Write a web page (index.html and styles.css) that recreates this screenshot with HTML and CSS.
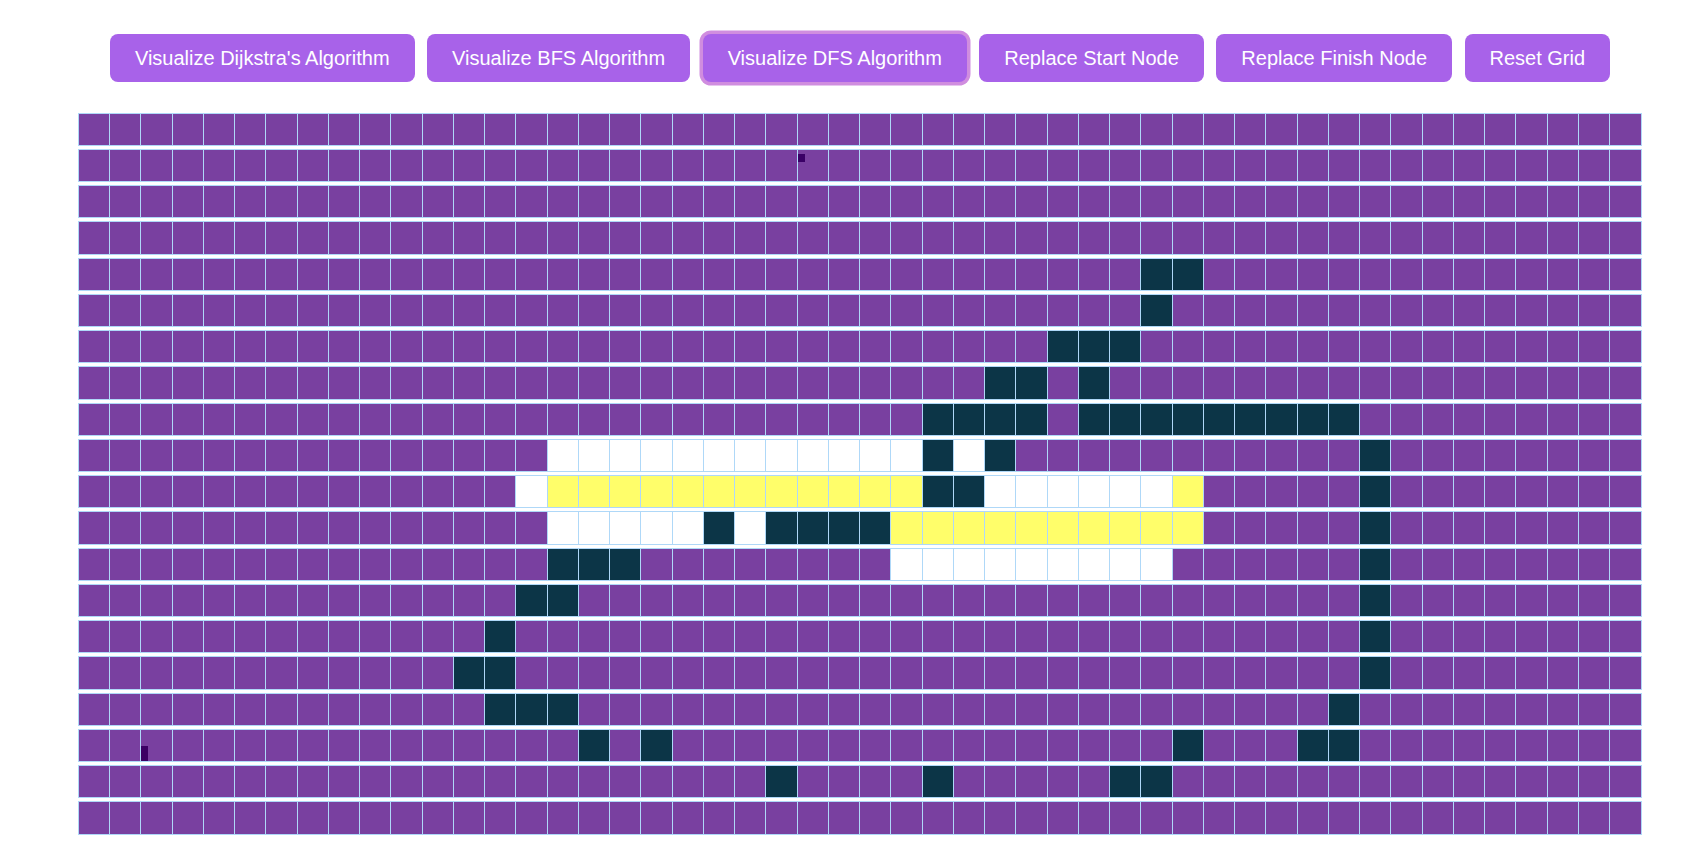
FILE: index.html
```html
<!DOCTYPE html>
<html lang="en">
<head>
<meta charset="utf-8">
<title>Pathfinding Visualizer</title>
<link rel="stylesheet" href="styles.css">
</head>
<body>
<div class="page">
  <div class="toolbar">
    <button class="btn">Visualize Dijkstra's Algorithm</button>
    <button class="btn">Visualize BFS Algorithm</button>
    <button class="btn btn-focused">Visualize DFS Algorithm</button>
    <button class="btn">Replace Start Node</button>
    <button class="btn">Replace Finish Node</button>
    <button class="btn">Reset Grid</button>
  </div>
  <div class="grid">
    <!-- row 0 -->
    <div class="row">
      <div class="cell"></div><div class="cell"></div><div class="cell"></div><div class="cell"></div><div class="cell"></div><div class="cell"></div><div class="cell"></div><div class="cell"></div><div class="cell"></div><div class="cell"></div>
      <div class="cell"></div><div class="cell"></div><div class="cell"></div><div class="cell"></div><div class="cell"></div><div class="cell"></div><div class="cell"></div><div class="cell"></div><div class="cell"></div><div class="cell"></div>
      <div class="cell"></div><div class="cell"></div><div class="cell"></div><div class="cell"></div><div class="cell"></div><div class="cell"></div><div class="cell"></div><div class="cell"></div><div class="cell"></div><div class="cell"></div>
      <div class="cell"></div><div class="cell"></div><div class="cell"></div><div class="cell"></div><div class="cell"></div><div class="cell"></div><div class="cell"></div><div class="cell"></div><div class="cell"></div><div class="cell"></div>
      <div class="cell"></div><div class="cell"></div><div class="cell"></div><div class="cell"></div><div class="cell"></div><div class="cell"></div><div class="cell"></div><div class="cell"></div><div class="cell"></div><div class="cell"></div>
    </div>
    <!-- row 1 -->
    <div class="row">
      <div class="cell"></div><div class="cell"></div><div class="cell"></div><div class="cell"></div><div class="cell"></div><div class="cell"></div><div class="cell"></div><div class="cell"></div><div class="cell"></div><div class="cell"></div>
      <div class="cell"></div><div class="cell"></div><div class="cell"></div><div class="cell"></div><div class="cell"></div><div class="cell"></div><div class="cell"></div><div class="cell"></div><div class="cell"></div><div class="cell"></div>
      <div class="cell"></div><div class="cell"></div><div class="cell"></div><div class="cell"><span class="marker-start"></span></div><div class="cell"></div><div class="cell"></div><div class="cell"></div><div class="cell"></div><div class="cell"></div><div class="cell"></div>
      <div class="cell"></div><div class="cell"></div><div class="cell"></div><div class="cell"></div><div class="cell"></div><div class="cell"></div><div class="cell"></div><div class="cell"></div><div class="cell"></div><div class="cell"></div>
      <div class="cell"></div><div class="cell"></div><div class="cell"></div><div class="cell"></div><div class="cell"></div><div class="cell"></div><div class="cell"></div><div class="cell"></div><div class="cell"></div><div class="cell"></div>
    </div>
    <!-- row 2 -->
    <div class="row">
      <div class="cell"></div><div class="cell"></div><div class="cell"></div><div class="cell"></div><div class="cell"></div><div class="cell"></div><div class="cell"></div><div class="cell"></div><div class="cell"></div><div class="cell"></div>
      <div class="cell"></div><div class="cell"></div><div class="cell"></div><div class="cell"></div><div class="cell"></div><div class="cell"></div><div class="cell"></div><div class="cell"></div><div class="cell"></div><div class="cell"></div>
      <div class="cell"></div><div class="cell"></div><div class="cell"></div><div class="cell"></div><div class="cell"></div><div class="cell"></div><div class="cell"></div><div class="cell"></div><div class="cell"></div><div class="cell"></div>
      <div class="cell"></div><div class="cell"></div><div class="cell"></div><div class="cell"></div><div class="cell"></div><div class="cell"></div><div class="cell"></div><div class="cell"></div><div class="cell"></div><div class="cell"></div>
      <div class="cell"></div><div class="cell"></div><div class="cell"></div><div class="cell"></div><div class="cell"></div><div class="cell"></div><div class="cell"></div><div class="cell"></div><div class="cell"></div><div class="cell"></div>
    </div>
    <!-- row 3 -->
    <div class="row">
      <div class="cell"></div><div class="cell"></div><div class="cell"></div><div class="cell"></div><div class="cell"></div><div class="cell"></div><div class="cell"></div><div class="cell"></div><div class="cell"></div><div class="cell"></div>
      <div class="cell"></div><div class="cell"></div><div class="cell"></div><div class="cell"></div><div class="cell"></div><div class="cell"></div><div class="cell"></div><div class="cell"></div><div class="cell"></div><div class="cell"></div>
      <div class="cell"></div><div class="cell"></div><div class="cell"></div><div class="cell"></div><div class="cell"></div><div class="cell"></div><div class="cell"></div><div class="cell"></div><div class="cell"></div><div class="cell"></div>
      <div class="cell"></div><div class="cell"></div><div class="cell"></div><div class="cell"></div><div class="cell"></div><div class="cell"></div><div class="cell"></div><div class="cell"></div><div class="cell"></div><div class="cell"></div>
      <div class="cell"></div><div class="cell"></div><div class="cell"></div><div class="cell"></div><div class="cell"></div><div class="cell"></div><div class="cell"></div><div class="cell"></div><div class="cell"></div><div class="cell"></div>
    </div>
    <!-- row 4 -->
    <div class="row">
      <div class="cell"></div><div class="cell"></div><div class="cell"></div><div class="cell"></div><div class="cell"></div><div class="cell"></div><div class="cell"></div><div class="cell"></div><div class="cell"></div><div class="cell"></div>
      <div class="cell"></div><div class="cell"></div><div class="cell"></div><div class="cell"></div><div class="cell"></div><div class="cell"></div><div class="cell"></div><div class="cell"></div><div class="cell"></div><div class="cell"></div>
      <div class="cell"></div><div class="cell"></div><div class="cell"></div><div class="cell"></div><div class="cell"></div><div class="cell"></div><div class="cell"></div><div class="cell"></div><div class="cell"></div><div class="cell"></div>
      <div class="cell"></div><div class="cell"></div><div class="cell"></div><div class="cell"></div><div class="cell wall"></div><div class="cell wall"></div><div class="cell"></div><div class="cell"></div><div class="cell"></div><div class="cell"></div>
      <div class="cell"></div><div class="cell"></div><div class="cell"></div><div class="cell"></div><div class="cell"></div><div class="cell"></div><div class="cell"></div><div class="cell"></div><div class="cell"></div><div class="cell"></div>
    </div>
    <!-- row 5 -->
    <div class="row">
      <div class="cell"></div><div class="cell"></div><div class="cell"></div><div class="cell"></div><div class="cell"></div><div class="cell"></div><div class="cell"></div><div class="cell"></div><div class="cell"></div><div class="cell"></div>
      <div class="cell"></div><div class="cell"></div><div class="cell"></div><div class="cell"></div><div class="cell"></div><div class="cell"></div><div class="cell"></div><div class="cell"></div><div class="cell"></div><div class="cell"></div>
      <div class="cell"></div><div class="cell"></div><div class="cell"></div><div class="cell"></div><div class="cell"></div><div class="cell"></div><div class="cell"></div><div class="cell"></div><div class="cell"></div><div class="cell"></div>
      <div class="cell"></div><div class="cell"></div><div class="cell"></div><div class="cell"></div><div class="cell wall"></div><div class="cell"></div><div class="cell"></div><div class="cell"></div><div class="cell"></div><div class="cell"></div>
      <div class="cell"></div><div class="cell"></div><div class="cell"></div><div class="cell"></div><div class="cell"></div><div class="cell"></div><div class="cell"></div><div class="cell"></div><div class="cell"></div><div class="cell"></div>
    </div>
    <!-- row 6 -->
    <div class="row">
      <div class="cell"></div><div class="cell"></div><div class="cell"></div><div class="cell"></div><div class="cell"></div><div class="cell"></div><div class="cell"></div><div class="cell"></div><div class="cell"></div><div class="cell"></div>
      <div class="cell"></div><div class="cell"></div><div class="cell"></div><div class="cell"></div><div class="cell"></div><div class="cell"></div><div class="cell"></div><div class="cell"></div><div class="cell"></div><div class="cell"></div>
      <div class="cell"></div><div class="cell"></div><div class="cell"></div><div class="cell"></div><div class="cell"></div><div class="cell"></div><div class="cell"></div><div class="cell"></div><div class="cell"></div><div class="cell"></div>
      <div class="cell"></div><div class="cell wall"></div><div class="cell wall"></div><div class="cell wall"></div><div class="cell"></div><div class="cell"></div><div class="cell"></div><div class="cell"></div><div class="cell"></div><div class="cell"></div>
      <div class="cell"></div><div class="cell"></div><div class="cell"></div><div class="cell"></div><div class="cell"></div><div class="cell"></div><div class="cell"></div><div class="cell"></div><div class="cell"></div><div class="cell"></div>
    </div>
    <!-- row 7 -->
    <div class="row">
      <div class="cell"></div><div class="cell"></div><div class="cell"></div><div class="cell"></div><div class="cell"></div><div class="cell"></div><div class="cell"></div><div class="cell"></div><div class="cell"></div><div class="cell"></div>
      <div class="cell"></div><div class="cell"></div><div class="cell"></div><div class="cell"></div><div class="cell"></div><div class="cell"></div><div class="cell"></div><div class="cell"></div><div class="cell"></div><div class="cell"></div>
      <div class="cell"></div><div class="cell"></div><div class="cell"></div><div class="cell"></div><div class="cell"></div><div class="cell"></div><div class="cell"></div><div class="cell"></div><div class="cell"></div><div class="cell wall"></div>
      <div class="cell wall"></div><div class="cell"></div><div class="cell wall"></div><div class="cell"></div><div class="cell"></div><div class="cell"></div><div class="cell"></div><div class="cell"></div><div class="cell"></div><div class="cell"></div>
      <div class="cell"></div><div class="cell"></div><div class="cell"></div><div class="cell"></div><div class="cell"></div><div class="cell"></div><div class="cell"></div><div class="cell"></div><div class="cell"></div><div class="cell"></div>
    </div>
    <!-- row 8 -->
    <div class="row">
      <div class="cell"></div><div class="cell"></div><div class="cell"></div><div class="cell"></div><div class="cell"></div><div class="cell"></div><div class="cell"></div><div class="cell"></div><div class="cell"></div><div class="cell"></div>
      <div class="cell"></div><div class="cell"></div><div class="cell"></div><div class="cell"></div><div class="cell"></div><div class="cell"></div><div class="cell"></div><div class="cell"></div><div class="cell"></div><div class="cell"></div>
      <div class="cell"></div><div class="cell"></div><div class="cell"></div><div class="cell"></div><div class="cell"></div><div class="cell"></div><div class="cell"></div><div class="cell wall"></div><div class="cell wall"></div><div class="cell wall"></div>
      <div class="cell wall"></div><div class="cell"></div><div class="cell wall"></div><div class="cell wall"></div><div class="cell wall"></div><div class="cell wall"></div><div class="cell wall"></div><div class="cell wall"></div><div class="cell wall"></div><div class="cell wall"></div>
      <div class="cell wall"></div><div class="cell"></div><div class="cell"></div><div class="cell"></div><div class="cell"></div><div class="cell"></div><div class="cell"></div><div class="cell"></div><div class="cell"></div><div class="cell"></div>
    </div>
    <!-- row 9 -->
    <div class="row">
      <div class="cell"></div><div class="cell"></div><div class="cell"></div><div class="cell"></div><div class="cell"></div><div class="cell"></div><div class="cell"></div><div class="cell"></div><div class="cell"></div><div class="cell"></div>
      <div class="cell"></div><div class="cell"></div><div class="cell"></div><div class="cell"></div><div class="cell"></div><div class="cell unvisited"></div><div class="cell unvisited"></div><div class="cell unvisited"></div><div class="cell unvisited"></div><div class="cell unvisited"></div>
      <div class="cell unvisited"></div><div class="cell unvisited"></div><div class="cell unvisited"></div><div class="cell unvisited"></div><div class="cell unvisited"></div><div class="cell unvisited"></div><div class="cell unvisited"></div><div class="cell wall"></div><div class="cell unvisited"></div><div class="cell wall"></div>
      <div class="cell"></div><div class="cell"></div><div class="cell"></div><div class="cell"></div><div class="cell"></div><div class="cell"></div><div class="cell"></div><div class="cell"></div><div class="cell"></div><div class="cell"></div>
      <div class="cell"></div><div class="cell wall"></div><div class="cell"></div><div class="cell"></div><div class="cell"></div><div class="cell"></div><div class="cell"></div><div class="cell"></div><div class="cell"></div><div class="cell"></div>
    </div>
    <!-- row 10 -->
    <div class="row">
      <div class="cell"></div><div class="cell"></div><div class="cell"></div><div class="cell"></div><div class="cell"></div><div class="cell"></div><div class="cell"></div><div class="cell"></div><div class="cell"></div><div class="cell"></div>
      <div class="cell"></div><div class="cell"></div><div class="cell"></div><div class="cell"></div><div class="cell unvisited"></div><div class="cell path"></div><div class="cell path"></div><div class="cell path"></div><div class="cell path"></div><div class="cell path"></div>
      <div class="cell path"></div><div class="cell path"></div><div class="cell path"></div><div class="cell path"></div><div class="cell path"></div><div class="cell path"></div><div class="cell path"></div><div class="cell wall"></div><div class="cell wall"></div><div class="cell unvisited"></div>
      <div class="cell unvisited"></div><div class="cell unvisited"></div><div class="cell unvisited"></div><div class="cell unvisited"></div><div class="cell unvisited"></div><div class="cell path"></div><div class="cell"></div><div class="cell"></div><div class="cell"></div><div class="cell"></div>
      <div class="cell"></div><div class="cell wall"></div><div class="cell"></div><div class="cell"></div><div class="cell"></div><div class="cell"></div><div class="cell"></div><div class="cell"></div><div class="cell"></div><div class="cell"></div>
    </div>
    <!-- row 11 -->
    <div class="row">
      <div class="cell"></div><div class="cell"></div><div class="cell"></div><div class="cell"></div><div class="cell"></div><div class="cell"></div><div class="cell"></div><div class="cell"></div><div class="cell"></div><div class="cell"></div>
      <div class="cell"></div><div class="cell"></div><div class="cell"></div><div class="cell"></div><div class="cell"></div><div class="cell unvisited"></div><div class="cell unvisited"></div><div class="cell unvisited"></div><div class="cell unvisited"></div><div class="cell unvisited"></div>
      <div class="cell wall"></div><div class="cell unvisited"></div><div class="cell wall"></div><div class="cell wall"></div><div class="cell wall"></div><div class="cell wall"></div><div class="cell path"></div><div class="cell path"></div><div class="cell path"></div><div class="cell path"></div>
      <div class="cell path"></div><div class="cell path"></div><div class="cell path"></div><div class="cell path"></div><div class="cell path"></div><div class="cell path"></div><div class="cell"></div><div class="cell"></div><div class="cell"></div><div class="cell"></div>
      <div class="cell"></div><div class="cell wall"></div><div class="cell"></div><div class="cell"></div><div class="cell"></div><div class="cell"></div><div class="cell"></div><div class="cell"></div><div class="cell"></div><div class="cell"></div>
    </div>
    <!-- row 12 -->
    <div class="row">
      <div class="cell"></div><div class="cell"></div><div class="cell"></div><div class="cell"></div><div class="cell"></div><div class="cell"></div><div class="cell"></div><div class="cell"></div><div class="cell"></div><div class="cell"></div>
      <div class="cell"></div><div class="cell"></div><div class="cell"></div><div class="cell"></div><div class="cell"></div><div class="cell wall"></div><div class="cell wall"></div><div class="cell wall"></div><div class="cell"></div><div class="cell"></div>
      <div class="cell"></div><div class="cell"></div><div class="cell"></div><div class="cell"></div><div class="cell"></div><div class="cell"></div><div class="cell unvisited"></div><div class="cell unvisited"></div><div class="cell unvisited"></div><div class="cell unvisited"></div>
      <div class="cell unvisited"></div><div class="cell unvisited"></div><div class="cell unvisited"></div><div class="cell unvisited"></div><div class="cell unvisited"></div><div class="cell"></div><div class="cell"></div><div class="cell"></div><div class="cell"></div><div class="cell"></div>
      <div class="cell"></div><div class="cell wall"></div><div class="cell"></div><div class="cell"></div><div class="cell"></div><div class="cell"></div><div class="cell"></div><div class="cell"></div><div class="cell"></div><div class="cell"></div>
    </div>
    <!-- row 13 -->
    <div class="row">
      <div class="cell"></div><div class="cell"></div><div class="cell"></div><div class="cell"></div><div class="cell"></div><div class="cell"></div><div class="cell"></div><div class="cell"></div><div class="cell"></div><div class="cell"></div>
      <div class="cell"></div><div class="cell"></div><div class="cell"></div><div class="cell"></div><div class="cell wall"></div><div class="cell wall"></div><div class="cell"></div><div class="cell"></div><div class="cell"></div><div class="cell"></div>
      <div class="cell"></div><div class="cell"></div><div class="cell"></div><div class="cell"></div><div class="cell"></div><div class="cell"></div><div class="cell"></div><div class="cell"></div><div class="cell"></div><div class="cell"></div>
      <div class="cell"></div><div class="cell"></div><div class="cell"></div><div class="cell"></div><div class="cell"></div><div class="cell"></div><div class="cell"></div><div class="cell"></div><div class="cell"></div><div class="cell"></div>
      <div class="cell"></div><div class="cell wall"></div><div class="cell"></div><div class="cell"></div><div class="cell"></div><div class="cell"></div><div class="cell"></div><div class="cell"></div><div class="cell"></div><div class="cell"></div>
    </div>
    <!-- row 14 -->
    <div class="row">
      <div class="cell"></div><div class="cell"></div><div class="cell"></div><div class="cell"></div><div class="cell"></div><div class="cell"></div><div class="cell"></div><div class="cell"></div><div class="cell"></div><div class="cell"></div>
      <div class="cell"></div><div class="cell"></div><div class="cell"></div><div class="cell wall"></div><div class="cell"></div><div class="cell"></div><div class="cell"></div><div class="cell"></div><div class="cell"></div><div class="cell"></div>
      <div class="cell"></div><div class="cell"></div><div class="cell"></div><div class="cell"></div><div class="cell"></div><div class="cell"></div><div class="cell"></div><div class="cell"></div><div class="cell"></div><div class="cell"></div>
      <div class="cell"></div><div class="cell"></div><div class="cell"></div><div class="cell"></div><div class="cell"></div><div class="cell"></div><div class="cell"></div><div class="cell"></div><div class="cell"></div><div class="cell"></div>
      <div class="cell"></div><div class="cell wall"></div><div class="cell"></div><div class="cell"></div><div class="cell"></div><div class="cell"></div><div class="cell"></div><div class="cell"></div><div class="cell"></div><div class="cell"></div>
    </div>
    <!-- row 15 -->
    <div class="row">
      <div class="cell"></div><div class="cell"></div><div class="cell"></div><div class="cell"></div><div class="cell"></div><div class="cell"></div><div class="cell"></div><div class="cell"></div><div class="cell"></div><div class="cell"></div>
      <div class="cell"></div><div class="cell"></div><div class="cell wall"></div><div class="cell wall"></div><div class="cell"></div><div class="cell"></div><div class="cell"></div><div class="cell"></div><div class="cell"></div><div class="cell"></div>
      <div class="cell"></div><div class="cell"></div><div class="cell"></div><div class="cell"></div><div class="cell"></div><div class="cell"></div><div class="cell"></div><div class="cell"></div><div class="cell"></div><div class="cell"></div>
      <div class="cell"></div><div class="cell"></div><div class="cell"></div><div class="cell"></div><div class="cell"></div><div class="cell"></div><div class="cell"></div><div class="cell"></div><div class="cell"></div><div class="cell"></div>
      <div class="cell"></div><div class="cell wall"></div><div class="cell"></div><div class="cell"></div><div class="cell"></div><div class="cell"></div><div class="cell"></div><div class="cell"></div><div class="cell"></div><div class="cell"></div>
    </div>
    <!-- row 16 -->
    <div class="row">
      <div class="cell"></div><div class="cell"></div><div class="cell"></div><div class="cell"></div><div class="cell"></div><div class="cell"></div><div class="cell"></div><div class="cell"></div><div class="cell"></div><div class="cell"></div>
      <div class="cell"></div><div class="cell"></div><div class="cell"></div><div class="cell wall"></div><div class="cell wall"></div><div class="cell wall"></div><div class="cell"></div><div class="cell"></div><div class="cell"></div><div class="cell"></div>
      <div class="cell"></div><div class="cell"></div><div class="cell"></div><div class="cell"></div><div class="cell"></div><div class="cell"></div><div class="cell"></div><div class="cell"></div><div class="cell"></div><div class="cell"></div>
      <div class="cell"></div><div class="cell"></div><div class="cell"></div><div class="cell"></div><div class="cell"></div><div class="cell"></div><div class="cell"></div><div class="cell"></div><div class="cell"></div><div class="cell"></div>
      <div class="cell wall"></div><div class="cell"></div><div class="cell"></div><div class="cell"></div><div class="cell"></div><div class="cell"></div><div class="cell"></div><div class="cell"></div><div class="cell"></div><div class="cell"></div>
    </div>
    <!-- row 17 -->
    <div class="row">
      <div class="cell"></div><div class="cell"></div><div class="cell"><span class="marker-finish"></span></div><div class="cell"></div><div class="cell"></div><div class="cell"></div><div class="cell"></div><div class="cell"></div><div class="cell"></div><div class="cell"></div>
      <div class="cell"></div><div class="cell"></div><div class="cell"></div><div class="cell"></div><div class="cell"></div><div class="cell"></div><div class="cell wall"></div><div class="cell"></div><div class="cell wall"></div><div class="cell"></div>
      <div class="cell"></div><div class="cell"></div><div class="cell"></div><div class="cell"></div><div class="cell"></div><div class="cell"></div><div class="cell"></div><div class="cell"></div><div class="cell"></div><div class="cell"></div>
      <div class="cell"></div><div class="cell"></div><div class="cell"></div><div class="cell"></div><div class="cell"></div><div class="cell wall"></div><div class="cell"></div><div class="cell"></div><div class="cell"></div><div class="cell wall"></div>
      <div class="cell wall"></div><div class="cell"></div><div class="cell"></div><div class="cell"></div><div class="cell"></div><div class="cell"></div><div class="cell"></div><div class="cell"></div><div class="cell"></div><div class="cell"></div>
    </div>
    <!-- row 18 -->
    <div class="row">
      <div class="cell"></div><div class="cell"></div><div class="cell"></div><div class="cell"></div><div class="cell"></div><div class="cell"></div><div class="cell"></div><div class="cell"></div><div class="cell"></div><div class="cell"></div>
      <div class="cell"></div><div class="cell"></div><div class="cell"></div><div class="cell"></div><div class="cell"></div><div class="cell"></div><div class="cell"></div><div class="cell"></div><div class="cell"></div><div class="cell"></div>
      <div class="cell"></div><div class="cell"></div><div class="cell wall"></div><div class="cell"></div><div class="cell"></div><div class="cell"></div><div class="cell"></div><div class="cell wall"></div><div class="cell"></div><div class="cell"></div>
      <div class="cell"></div><div class="cell"></div><div class="cell"></div><div class="cell wall"></div><div class="cell wall"></div><div class="cell"></div><div class="cell"></div><div class="cell"></div><div class="cell"></div><div class="cell"></div>
      <div class="cell"></div><div class="cell"></div><div class="cell"></div><div class="cell"></div><div class="cell"></div><div class="cell"></div><div class="cell"></div><div class="cell"></div><div class="cell"></div><div class="cell"></div>
    </div>
    <!-- row 19 -->
    <div class="row">
      <div class="cell"></div><div class="cell"></div><div class="cell"></div><div class="cell"></div><div class="cell"></div><div class="cell"></div><div class="cell"></div><div class="cell"></div><div class="cell"></div><div class="cell"></div>
      <div class="cell"></div><div class="cell"></div><div class="cell"></div><div class="cell"></div><div class="cell"></div><div class="cell"></div><div class="cell"></div><div class="cell"></div><div class="cell"></div><div class="cell"></div>
      <div class="cell"></div><div class="cell"></div><div class="cell"></div><div class="cell"></div><div class="cell"></div><div class="cell"></div><div class="cell"></div><div class="cell"></div><div class="cell"></div><div class="cell"></div>
      <div class="cell"></div><div class="cell"></div><div class="cell"></div><div class="cell"></div><div class="cell"></div><div class="cell"></div><div class="cell"></div><div class="cell"></div><div class="cell"></div><div class="cell"></div>
      <div class="cell"></div><div class="cell"></div><div class="cell"></div><div class="cell"></div><div class="cell"></div><div class="cell"></div><div class="cell"></div><div class="cell"></div><div class="cell"></div><div class="cell"></div>
    </div>
  </div>
</div>
</body>
</html>
```

FILE: styles.css
```css
* {
  box-sizing: border-box;
}

body {
  margin: 0;
  background: #ffffff;
  font-family: "Liberation Sans", Arial, sans-serif;
}

.page {
  display: flex;
  flex-direction: column;
  align-items: center;
  padding-left: 17px;
  padding-top: 34px;
}

.toolbar {
  display: flex;
  gap: 12.5px;
}

.btn {
  height: 48px;
  padding: 0 25px;
  border: none;
  border-radius: 8px;
  background: #a862e9;
  color: #ffffff;
  font-family: "Liberation Sans", Arial, sans-serif;
  font-size: 20px;
  line-height: 23px;
  cursor: pointer;
}

.btn-focused {
  box-shadow: 0 0 0 3.5px #d08ddf;
}

.grid {
  margin-top: 31.5px;
  width: 1562.5px;
}

.row {
  display: flex;
  height: 31.25px;
  margin-bottom: 5px;
}

.cell {
  flex: none;
  width: 31.25px;
  height: 31.25px;
  background: #7940a0;
  outline: 1.25px solid rgb(175, 216, 248);
}

.wall {
  background: rgb(12, 53, 71);
}

.unvisited {
  background: #ffffff;
}

.path {
  background: rgb(255, 254, 106);
}

.marker-start {
  display: block;
  width: 7px;
  height: 8px;
  margin-top: 4px;
  background: #3a0066;
}

.marker-finish {
  display: block;
  width: 7px;
  height: 15px;
  margin-top: 16px;
  background: #3c0064;
}
```
